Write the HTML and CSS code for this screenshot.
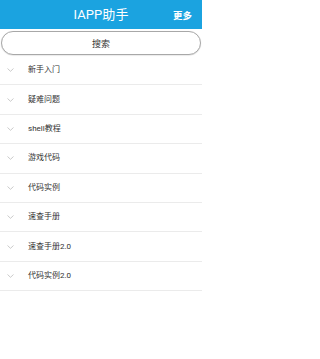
FILE: index.html
```html
<!DOCTYPE html>
<html lang="zh-CN">
<head>
<meta charset="utf-8">
<title>IAPP助手</title>
<link rel="stylesheet" href="styles.css">
</head>
<body>
<div class="app">
  <header class="topbar">
    <span class="title">IAPP助手</span>
    <span class="more">更多</span>
  </header>
  <div class="search-wrap">
    <button class="search">搜索</button>
  </div>
  <ul class="list">
    <li class="row"><span class="chev"><svg width="7" height="4" viewBox="0 0 7 4"><polyline points="0.5,0.5 3.5,3.3 6.5,0.5" fill="none" stroke="#bdbdbd" stroke-width="0.8"/></svg></span><span class="label">新手入门</span></li>
    <li class="row"><span class="chev"><svg width="7" height="4" viewBox="0 0 7 4"><polyline points="0.5,0.5 3.5,3.3 6.5,0.5" fill="none" stroke="#bdbdbd" stroke-width="0.8"/></svg></span><span class="label">疑难问题</span></li>
    <li class="row"><span class="chev"><svg width="7" height="4" viewBox="0 0 7 4"><polyline points="0.5,0.5 3.5,3.3 6.5,0.5" fill="none" stroke="#bdbdbd" stroke-width="0.8"/></svg></span><span class="label">shell教程</span></li>
    <li class="row"><span class="chev"><svg width="7" height="4" viewBox="0 0 7 4"><polyline points="0.5,0.5 3.5,3.3 6.5,0.5" fill="none" stroke="#bdbdbd" stroke-width="0.8"/></svg></span><span class="label">游戏代码</span></li>
    <li class="row"><span class="chev"><svg width="7" height="4" viewBox="0 0 7 4"><polyline points="0.5,0.5 3.5,3.3 6.5,0.5" fill="none" stroke="#bdbdbd" stroke-width="0.8"/></svg></span><span class="label">代码实例</span></li>
    <li class="row"><span class="chev"><svg width="7" height="4" viewBox="0 0 7 4"><polyline points="0.5,0.5 3.5,3.3 6.5,0.5" fill="none" stroke="#bdbdbd" stroke-width="0.8"/></svg></span><span class="label">速查手册</span></li>
    <li class="row"><span class="chev"><svg width="7" height="4" viewBox="0 0 7 4"><polyline points="0.5,0.5 3.5,3.3 6.5,0.5" fill="none" stroke="#bdbdbd" stroke-width="0.8"/></svg></span><span class="label">速查手册2.0</span></li>
    <li class="row"><span class="chev"><svg width="7" height="4" viewBox="0 0 7 4"><polyline points="0.5,0.5 3.5,3.3 6.5,0.5" fill="none" stroke="#bdbdbd" stroke-width="0.8"/></svg></span><span class="label">代码实例2.0</span></li>
  </ul>
</div>
</body>
</html>
```
FILE: styles.css
```css
* { box-sizing: border-box; }
html, body {
  margin: 0;
  padding: 0;
  background: #ffffff;
}
body {
  font-family: Roboto, "Noto Sans CJK SC", "Noto Sans", sans-serif;
  color: #333333;
}
.app {
  width: 202px;
  display: flex;
  flex-direction: column;
}
.topbar {
  height: 29px;
  background: #1ba3e0;
  display: flex;
  align-items: center;
  justify-content: center;
  position: relative;
  color: #ffffff;
}
.title {
  font-size: 13px;
  line-height: 1;
  letter-spacing: 0.1px;
}
.more {
  position: absolute;
  right: 10px;
  top: 0;
  height: 29px;
  display: flex;
  align-items: center;
  font-size: 9.5px;
  font-weight: bold;
}
.search-wrap {
  padding: 2px 1px 0 1px;
}
.search {
  display: flex;
  align-items: center;
  justify-content: center;
  width: 100%;
  height: 24px;
  margin: 0;
  padding: 0;
  background: #ffffff;
  border: 1px solid #a8a8a8;
  border-radius: 12px;
  font-family: Roboto, "Noto Sans CJK SC", sans-serif;
  font-size: 9px;
  color: #333333;
  box-shadow: 0 0.5px 1px rgba(0,0,0,0.15);
}
.list {
  list-style: none;
  margin: 1px 0 0 0;
  padding: 0;
}
.row {
  height: 29.4px;
  border-bottom: 1px solid #ebebeb;
  display: flex;
  align-items: center;
}
.chev {
  width: 28px;
  padding-left: 7px;
  display: flex;
  align-items: center;
}
.chev svg { display: block; }
.label {
  font-size: 8px;
  color: #333333;
  line-height: 1;
}
```
